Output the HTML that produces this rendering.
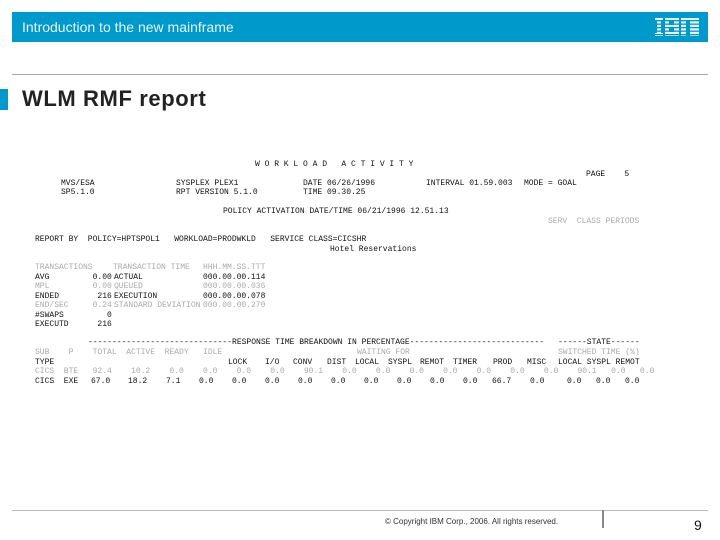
<!DOCTYPE html>
<html><head><meta charset="utf-8"><style>
body{margin:0;width:720px;height:540px;background:#fff;position:relative;overflow:hidden;font-family:"Liberation Sans",sans-serif}
.a{position:absolute;white-space:pre}
.m{position:absolute;white-space:pre;font-family:"Liberation Mono",monospace;font-size:8px;color:#111;line-height:9px}
.g{color:#aaa}
</style></head><body>
<div class="a" style="left:12px;top:12px;width:696px;height:30px;background:#0099cc"></div>
<div class="a" style="left:22px;top:19px;font-size:14px;color:#e8f4fa">Introduction to the new mainframe</div>
<svg class="a" style="left:655px;top:18px" width="44" height="18" viewBox="0 0 44 18">
<g fill="#e8f4fa">
<rect x="0" y="0" width="8" height="18"/><rect x="10" y="0" width="14" height="18"/><rect x="26" y="0" width="18" height="18"/>
</g>
<g fill="#0099cc"><rect x="0" y="2" width="44" height="1.3"/><rect x="0" y="5.5" width="44" height="1.3"/><rect x="0" y="9" width="44" height="1.3"/><rect x="0" y="12.5" width="44" height="1.3"/><rect x="0" y="16" width="44" height="1.3"/>
<rect x="0" y="3" width="2" height="12"/><rect x="6" y="3" width="2" height="12"/><rect x="14" y="3" width="5" height="4"/><rect x="14" y="10" width="5" height="4"/><rect x="31" y="3" width="4" height="15" /></g>
</svg>
<div class="a" style="left:12px;top:74px;width:696px;height:1px;background:#aaa"></div>
<div class="a" style="left:0;top:89px;width:8px;height:21px;background:#0099cc"></div>
<div class="a" style="left:22px;top:86px;font-size:22px;color:#222;font-weight:bold;letter-spacing:0.6px">WLM RMF report</div>

<div class="m" style="left:255px;top:160px">W O R K L O A D   A C T I V I T Y</div>
<div class="m" style="left:586px;top:170px">PAGE    5</div>
<div class="m" style="left:61px;top:179px">MVS/ESA</div>
<div class="m" style="left:176px;top:179px">SYSPLEX PLEX1</div>
<div class="m" style="left:303px;top:179px">DATE 06/26/1996</div>
<div class="m" style="left:426px;top:179px">INTERVAL 01.59.003</div>
<div class="m" style="left:524px;top:179px">MODE = GOAL</div>
<div class="m" style="left:61px;top:188px">SP5.1.0</div>
<div class="m" style="left:176px;top:188px">RPT VERSION 5.1.0</div>
<div class="m" style="left:303px;top:188px">TIME 09.30.25</div>
<div class="m" style="left:223px;top:207px">POLICY ACTIVATION DATE/TIME 06/21/1996 12.51.13</div>
<div class="m g" style="left:548px;top:217px">SERV  CLASS PERIODS</div>
<div class="m" style="left:35px;top:235px">REPORT BY  POLICY=HPTSPOL1   WORKLOAD=PRODWKLD   SERVICE CLASS=CICSHR</div>
<div class="m" style="left:330px;top:245px">Hotel Reservations</div>
<div class="m g" style="left:35px;top:263px">TRANSACTIONS</div>
<div class="m g" style="left:113px;top:263px">TRANSACTION TIME</div>
<div class="m g" style="left:203px;top:263px">HHH.MM.SS.TTT</div>
<div class="m" style="left:35px;top:273px">AVG         0.00</div>
<div class="m g" style="left:35px;top:282px">MPL         0.00</div>
<div class="m" style="left:35px;top:292px">ENDED        216</div>
<div class="m g" style="left:35px;top:301px">END/SEC     0.24</div>
<div class="m" style="left:35px;top:311px">#SWAPS         0</div>
<div class="m" style="left:35px;top:320px">EXECUTD      216</div>
<div class="m" style="left:114px;top:273px">ACTUAL</div>
<div class="m g" style="left:114px;top:282px">QUEUED</div>
<div class="m" style="left:114px;top:292px">EXECUTION</div>
<div class="m g" style="left:114px;top:301px">STANDARD DEVIATION</div>
<div class="m" style="left:203px;top:273px">000.00.00.114</div>
<div class="m g" style="left:203px;top:282px">000.00.00.036</div>
<div class="m" style="left:203px;top:292px">000.00.00.078</div>
<div class="m g" style="left:203px;top:301px">000.00.00.270</div>

<div class="m" style="left:88px;top:338px">------------------------------RESPONSE TIME BREAKDOWN IN PERCENTAGE----------------------------</div>
<div class="m" style="left:558px;top:338px">------STATE------</div>
<div class="m g" style="left:35px;top:348px">SUB    P    TOTAL  ACTIVE  READY   IDLE</div>
<div class="m g" style="left:357px;top:348px">WAITING FOR</div>
<div class="m g" style="left:558px;top:348px">SWITCHED TIME (%)</div>
<div class="m" style="left:35px;top:358px">TYPE</div>
<div class="m" style="left:228px;top:358px">LOCK</div>
<div class="m" style="left:265px;top:358px">I/O</div>
<div class="m" style="left:293px;top:358px">CONV</div>
<div class="m" style="left:327px;top:358px">DIST</div>
<div class="m" style="left:355px;top:358px">LOCAL</div>
<div class="m" style="left:388px;top:358px">SYSPL</div>
<div class="m" style="left:420px;top:358px">REMOT</div>
<div class="m" style="left:453px;top:358px">TIMER</div>
<div class="m" style="left:493px;top:358px">PROD</div>
<div class="m" style="left:527px;top:358px">MISC</div>
<div class="m" style="left:558px;top:358px">LOCAL SYSPL REMOT</div>
<div class="m g" style="left:35px;top:367px">CICS  BTE   92.4    10.2    0.0    0.0    0.0    0.0    90.1    0.0    0.0    0.0    0.0    0.0    0.0    0.0    90.1   0.0   0.0</div>
<div class="m" style="left:35px;top:377px">CICS  EXE</div>
<div class="m" style="left:91px;top:377px">67.0</div>
<div class="m" style="left:128px;top:377px">18.2</div>
<div class="m" style="left:166px;top:377px">7.1</div>
<div class="m" style="left:199px;top:377px">0.0</div>
<div class="m" style="left:232px;top:377px">0.0</div>
<div class="m" style="left:265px;top:377px">0.0</div>
<div class="m" style="left:298px;top:377px">0.0</div>
<div class="m" style="left:331px;top:377px">0.0</div>
<div class="m" style="left:364px;top:377px">0.0</div>
<div class="m" style="left:397px;top:377px">0.0</div>
<div class="m" style="left:430px;top:377px">0.0</div>
<div class="m" style="left:463px;top:377px">0.0</div>
<div class="m" style="left:492px;top:377px">66.7</div>
<div class="m" style="left:530px;top:377px">0.0</div>
<div class="m" style="left:567px;top:377px">0.0</div>
<div class="m" style="left:596px;top:377px">0.0</div>
<div class="m" style="left:625px;top:377px">0.0</div>

<div class="a" style="left:12px;top:510px;width:696px;height:1px;background:#bbb"></div>
<div class="a" style="left:602px;top:510px;width:2px;height:18px;background:#888"></div>
<div class="a" style="left:385px;top:517px;font-size:8px;color:#333">© Copyright IBM Corp., 2006. All rights reserved.</div>
<div class="a" style="left:694px;top:517px;font-size:14px;color:#111">9</div>
</body></html>
